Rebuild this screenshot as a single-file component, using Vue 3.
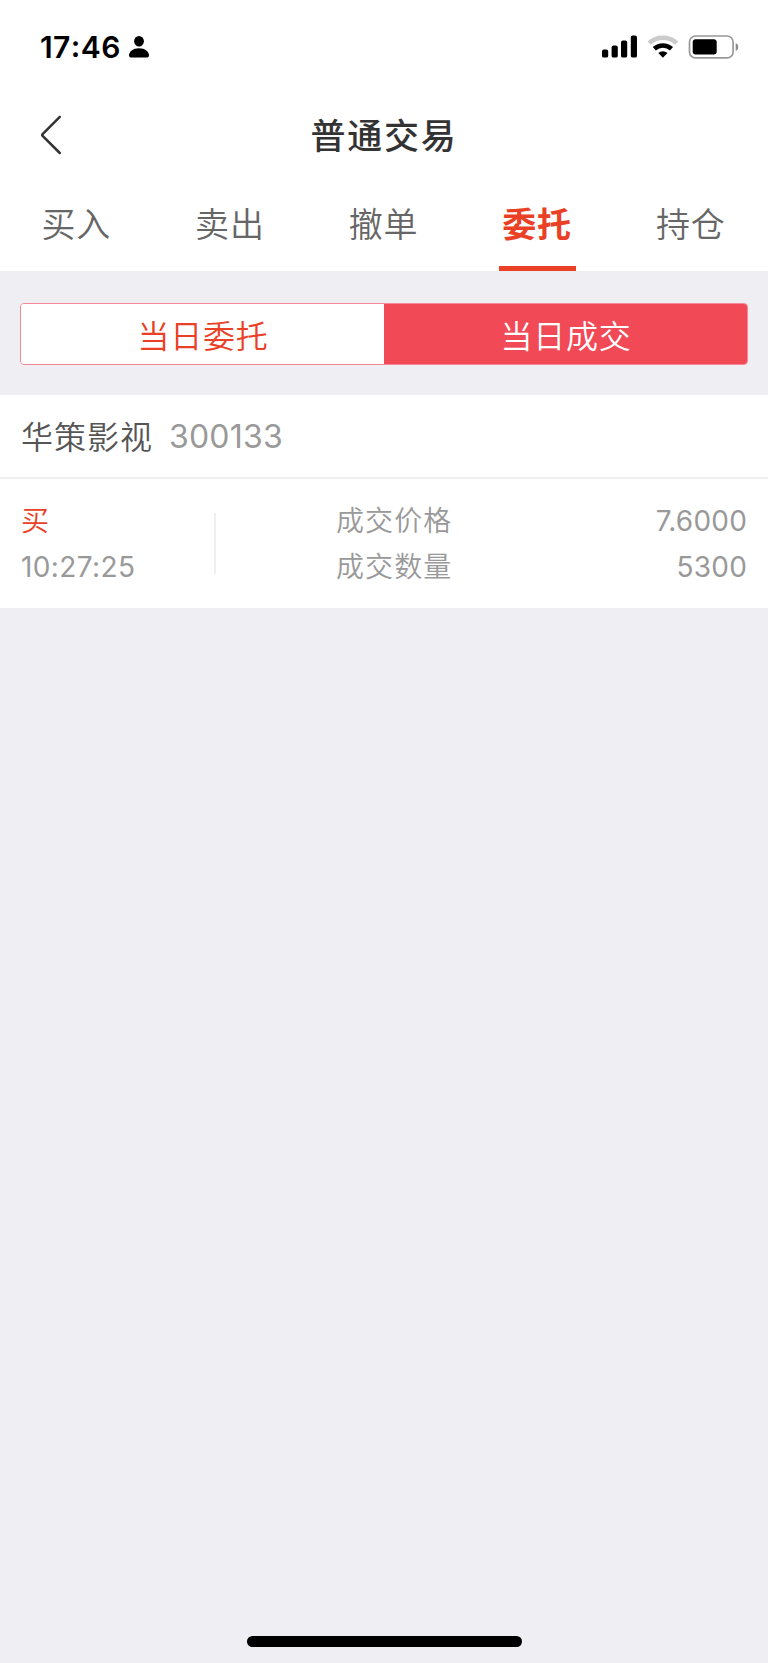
<script setup>
const tabs = ['买入', '卖出', '撤单', '委托', '持仓']
const activeTab = '委托'
const trade = {
  name: '华策影视',
  code: '300133',
  side: '买',
  time: '10:27:25',
  rows: [
    { label: '成交价格', value: '7.6000' },
    { label: '成交数量', value: '5300' },
  ],
}
</script>

<template>
  <div class="screen">
    <div class="status">
      <div class="status-left">
        <span class="clock">17<span class="colon">:</span>46</span>
        <svg class="person" width="22" height="22" viewBox="0 0 22 22">
          <ellipse cx="11" cy="5.3" rx="4.9" ry="5.2" />
          <path d="M1 19.2C1 15.6 5 12.2 11 12.2s10 3.4 10 7c0 1.600-.9 2.300-2.300 2.300H3.300C1.900 21.500 1 20.800 1 19.200z" />
        </svg>
      </div>
      <div class="status-right">
        <svg width="36" height="24" viewBox="0 0 36 24">
          <rect x="0" y="14.500" width="6.200" height="8.100" rx="1.900" />
          <rect x="9.600" y="10.500" width="6.200" height="12.100" rx="1.900" />
          <rect x="19" y="5.600" width="6.200" height="17" rx="1.900" />
          <rect x="28.800" y="0.500" width="6.200" height="22.100" rx="1.900" />
        </svg>
        <svg width="32" height="24" viewBox="0 0 32 24">
          <path d="M2.100 8.100A20.500 20.500 0 0 1 29.700 8.100" fill="none" stroke="#cbcbcb" stroke-width="4.600" />
          <path d="M7.300 13.700A13 13 0 0 1 24.500 13.700" fill="none" stroke="#000" stroke-width="4.600" />
          <path d="M11.300 18.100A6.800 6.800 0 0 1 20.500 18.100L15.900 22.700z" />
        </svg>
        <svg width="51" height="24" viewBox="0 0 51 24">
          <rect x="1.500" y="1" width="43.600" height="21.900" rx="6" fill="none" stroke="#999" stroke-width="1.700" />
          <rect x="4.700" y="4.300" width="24" height="15.300" rx="3" />
          <path d="M47.700 8C51.100 9.200 51.100 14.800 47.700 16z" fill="#8c8c8c" />
        </svg>
      </div>
    </div>

    <header class="header">
      <svg class="back" width="24" height="42" viewBox="0 0 24 42">
        <path d="M20.800 2.800L3.600 20.200Q2.800 21 3.600 21.800L20.800 39" fill="none" stroke="#333" stroke-width="2.500" stroke-linecap="round" />
      </svg>
      <h1 class="title">普通交易</h1>
    </header>

    <nav class="tabs">
      <div v-for="tab in tabs" :key="tab" class="tab" :class="{ active: tab === activeTab }">
        <span class="tab-label">{{ tab }}</span>
      </div>
    </nav>

    <div class="segment">
      <div class="seg light"><span>当日委托</span></div>
      <div class="seg solid"><span>当日成交</span></div>
    </div>

    <section class="card">
      <div class="stock">
        <span class="name">{{ trade.name }}</span>
        <span class="code">{{ trade.code }}</span>
      </div>
      <div class="detail">
        <div class="when">
          <div class="line buy">{{ trade.side }}</div>
          <div class="line time">{{ trade.time }}</div>
        </div>
        <div class="rule"></div>
        <div class="values">
          <div v-for="row in trade.rows" :key="row.label" class="line pair">
            <span class="label">{{ row.label }}</span>
            <span class="num">{{ row.value }}</span>
          </div>
        </div>
      </div>
    </section>

    <div class="home"></div>
  </div>
</template>

<style>
body {
  margin: 0;
  background: #efeef3;
}
</style>

<style scoped>
.screen {
  width: 768px;
  height: 1663px;
  box-sizing: border-box;
  display: flex;
  flex-direction: column;
  background: #efeef3;
  font-family: Inter, "Noto Sans CJK SC", sans-serif;
  overflow: hidden;
  white-space: nowrap;
}
.status {
  height: 94px;
  flex: none;
  box-sizing: border-box;
  background: #fff;
  padding: 0 29px 0 40px;
  display: flex;
  justify-content: space-between;
  align-items: center;
}
.status-left,
.status-right {
  display: flex;
  align-items: center;
}
.status-right {
  gap: 9px;
}
.clock {
  font-size: 30px;
  font-weight: 600;
  line-height: 36px;
  letter-spacing: 0.400px;
  width: 88px;
}
.colon {
  display: inline-block;
  transform: translateY(-1.500px);
}
.header {
  height: 82px;
  flex: none;
  background: #fff;
  display: grid;
  grid-template-columns: 100px 1fr 100px;
  align-items: center;
}
.back {
  margin-left: 39px;
}
.title {
  margin: 2px 0 0;
  text-align: center;
  font-size: 35px;
  font-weight: 500;
  line-height: 44px;
  letter-spacing: 1.800px;
  color: #333;
}
.tabs {
  height: 95px;
  flex: none;
  background: #fff;
  display: grid;
  grid-template-columns: repeat(5, 1fr);
}
.tab {
  display: flex;
  justify-content: center;
}
.tab-label {
  width: 77px;
  height: 95px;
  box-sizing: border-box;
  padding: 25px 1px 0 0;
  text-align: center;
  font-size: 34px;
  font-weight: 350;
  line-height: 48px;
  letter-spacing: 0.800px;
  color: #666;
}
.active .tab-label {
  color: #ea4025;
  font-weight: 700;
  border-bottom: 5px solid #ea4025;
}
.segment {
  margin: 32px 20px 30px;
  height: 62px;
  flex: none;
  box-sizing: border-box;
  border: 1px solid #f58893;
  border-radius: 4px;
  overflow: hidden;
  display: grid;
  grid-template-columns: 1fr 1fr;
  font-size: 32px;
  font-weight: 350;
  letter-spacing: 0.800px;
  line-height: 65px;
  text-align: center;
}
.seg {
  padding-left: 1px;
}
.light {
  background: #fff;
  color: #ea4025;
}
.solid {
  background: #f24957;
  color: #fff;
}
.card {
  background: #fff;
  height: 213px;
  flex: none;
}
.stock {
  height: 84px;
  box-sizing: border-box;
  border-bottom: 2px solid #efefef;
  padding-left: 21px;
  display: flex;
  align-items: center;
}
.name {
  font-size: 32px;
  font-weight: 350;
  letter-spacing: 1px;
  color: #555;
  width: 148px;
  margin-top: -2px;
}
.code {
  font-size: 32px;
  letter-spacing: 0.200px;
  color: #999;
}
.detail {
  height: 129px;
  display: flex;
  font-size: 28px;
  color: #999;
}
.when {
  width: 193px;
  padding: 19px 0 0 21px;
}
.line {
  height: 46px;
  line-height: 46px;
}
.buy {
  color: #ea4025;
  font-weight: 350;
}
.time {
  letter-spacing: 0.400px;
}
.rule {
  width: 2px;
  height: 61px;
  margin-top: 34px;
  background: #efefef;
}
.values {
  flex: 1;
  padding: 19px 21px 0 120px;
}
.pair {
  display: flex;
  justify-content: space-between;
}
.label {
  font-weight: 350;
  letter-spacing: 1.100px;
}
.num {
  letter-spacing: 0.200px;
}
.home {
  width: 275px;
  height: 11px;
  flex: none;
  margin: auto auto 16px 247px;
  border-radius: 6px;
  background: #000;
}
</style>
